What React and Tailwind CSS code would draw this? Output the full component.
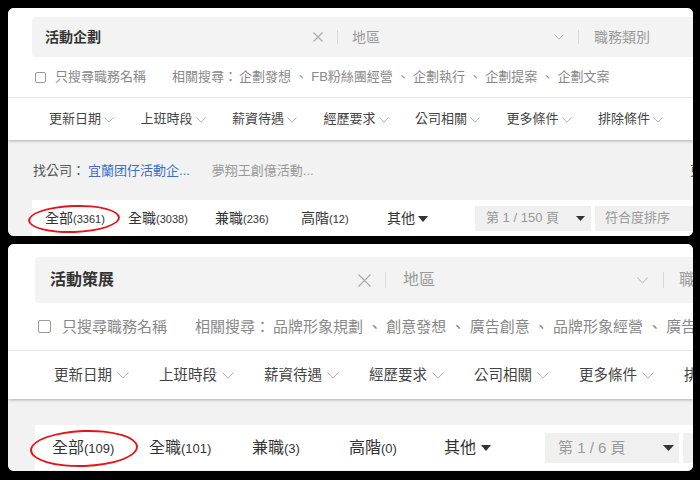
import React from "react";

const Chev = ({ w = 10, h = 6, color = "#b3b3b3" }) => (
  <svg width={w} height={h} viewBox={`0 0 ${w} ${h}`} fill="none" className="shrink-0">
    <polyline points={`0.5,0.5 ${w / 2},${h - 0.8} ${w - 0.5},0.5`} stroke={color} strokeWidth="1" />
  </svg>
);

const Caret = ({ w = 9, h = 5, color = "#333" }) => (
  <svg width={w} height={h} viewBox={`0 0 ${w} ${h}`} className="shrink-0">
    <polygon points={`0,0 ${w},0 ${w / 2},${h}`} fill={color} />
  </svg>
);

const XIcon = ({ s = 10 }) => (
  <svg width={s} height={s} viewBox={`0 0 ${s} ${s}`} fill="none" className="shrink-0">
    <path d={`M0.5 0.5L${s - 0.5} ${s - 0.5}M${s - 0.5} 0.5L0.5 ${s - 0.5}`} stroke="#aaa" strokeWidth="1.1" />
  </svg>
);

const filters = ["更新日期", "上班時段", "薪資待遇", "經歷要求", "公司相關", "更多條件", "排除條件"];

function Panel1() {
  return (
    <div className="h-[228px] rounded-[6px] bg-white overflow-hidden flex flex-col shrink-0">
      <div className="relative z-10 bg-white shadow-[0_1px_3px_rgba(0,0,0,0.28)]">
        <div className="pl-[24px] pt-[9px]">
          <div className="h-[40px] bg-[#f3f3f3] rounded-l-[4px] flex items-center whitespace-nowrap">
            <div className="w-[305px] shrink-0 flex items-center pl-[13px] pr-[14px]">
              <span className="flex-1 text-[14px] font-semibold text-[#333] leading-[20px]">活動企劃</span>
              <XIcon s={10} />
            </div>
            <div className="w-px h-[14px] bg-[#d9d9d9] shrink-0" />
            <div className="w-[240px] shrink-0 flex items-center pl-[14px] pr-[14px]">
              <span className="flex-1 text-[14px] text-[#999] leading-[20px]">地區</span>
              <Chev w={10} h={6} />
            </div>
            <div className="w-px h-[14px] bg-[#d9d9d9] shrink-0" />
            <div className="pl-[15px] text-[14px] text-[#999] leading-[20px]">職務類別</div>
          </div>
        </div>
        <div className="h-[40px] flex items-center pl-[27px] text-[13px] text-[#888] whitespace-nowrap leading-[18px]">
          <span className="w-[11px] h-[11px] border border-[#999] rounded-[2px] shrink-0" />
          <span className="ml-[9px]">只搜尋職務名稱</span>
          <span className="ml-[26px]">相關搜尋：</span>
          <span className="ml-[2px]">企劃發想 、 FB粉絲團經營 、 企劃執行 、 企劃提案 、 企劃文案</span>
        </div>
        <div className="border-t border-[#e6e6e6] h-[43px] flex items-center pl-[41px] gap-[26.5px] whitespace-nowrap">
          {filters.map((f) => (
            <div key={f} className="flex items-center shrink-0">
              <span className="text-[13px] text-[#444] leading-[18px]">{f}</span>
              <span className="ml-[3px] mt-[1px]"><Chev w={10} h={6} /></span>
            </div>
          ))}
        </div>
      </div>
      <div className="bg-[#f2f2f2] flex-1 flex flex-col">
        <div className="h-[60px] flex items-center pl-[25px] pt-[2px] text-[13px] leading-[18px] whitespace-nowrap">
          <span className="text-[#555]">找公司：</span>
          <span className="ml-[3px] text-[#3b6fc4]">宜蘭团仔活動企...</span>
          <span className="ml-[22px] text-[#999]">夢翔王創億活動...</span>
          <span className="ml-auto -mr-[10px] text-[#555]">更</span>
        </div>
        <div className="ml-[24px] bg-white h-[36px] flex items-center relative whitespace-nowrap">
          <div className="absolute left-[-4px] top-[5px] w-[92px] h-[28px] rounded-[50%] border-2 border-[#e3141c] -rotate-2" />
          <div className="flex items-center pl-[13px] text-[#333]">
            <span className="w-[83px] flex items-baseline"><span className="text-[14px] leading-[20px]">全部</span><span className="text-[11px]">(3361)</span></span>
            <span className="w-[87px] flex items-baseline"><span className="text-[14px] leading-[20px]">全職</span><span className="text-[11px]">(3038)</span></span>
            <span className="w-[86px] flex items-baseline"><span className="text-[14px] leading-[20px]">兼職</span><span className="text-[11px]">(236)</span></span>
            <span className="w-[86px] flex items-baseline"><span className="text-[14px] leading-[20px]">高階</span><span className="text-[11px]">(12)</span></span>
            <span className="w-[88px] flex items-center"><span className="text-[14px] leading-[20px]">其他</span><span className="ml-[3px] mt-[1px]"><Caret w={10} h={6} /></span></span>
          </div>
          <div className="w-[116px] h-[25px] bg-[#f0f0f0] flex items-center justify-between pl-[11px] pr-[6px] shrink-0">
            <span className="text-[13px] text-[#999] leading-[18px]">第 1 / 150 頁</span>
            <Caret w={9} h={5} />
          </div>
          <div className="ml-[4px] w-[120px] h-[25px] bg-[#f0f0f0] flex items-center pl-[10px] shrink-0">
            <span className="text-[13px] text-[#999] leading-[18px]">符合度排序</span>
          </div>
        </div>
      </div>
    </div>
  );
}

function Panel2() {
  return (
    <div className="h-[227px] rounded-[6px] bg-white overflow-hidden flex flex-col shrink-0">
      <div className="relative z-10 bg-white shadow-[0_1px_3px_rgba(0,0,0,0.28)]">
        <div className="pl-[27px] pt-[13px]">
          <div className="h-[46px] bg-[#f3f3f3] rounded-l-[4px] flex items-center whitespace-nowrap">
            <div className="w-[350px] shrink-0 flex items-center pl-[15px] pr-[14px]">
              <span className="flex-1 text-[16px] font-semibold text-[#333] leading-[22px]">活動策展</span>
              <XIcon s={13} />
            </div>
            <div className="w-px h-[16px] bg-[#d9d9d9] shrink-0" />
            <div className="w-[277px] shrink-0 flex items-center pl-[17px] pr-[15px]">
              <span className="flex-1 text-[16px] text-[#999] leading-[22px]">地區</span>
              <Chev w={11} h={7} />
            </div>
            <div className="w-px h-[16px] bg-[#d9d9d9] shrink-0" />
            <div className="pl-[15px] text-[16px] text-[#999] leading-[22px]">職務類別</div>
          </div>
        </div>
        <div className="h-[47px] flex items-center pl-[30px] text-[15px] text-[#888] whitespace-nowrap leading-[20px]">
          <span className="w-[13px] h-[13px] border border-[#999] rounded-[2px] shrink-0" />
          <span className="ml-[11px]">只搜尋職務名稱</span>
          <span className="ml-[28px]">相關搜尋：</span>
          <span className="ml-[3px]">品牌形象規劃 、 創意發想 、 廣告創意 、 品牌形象經營 、 廣告創意發想</span>
        </div>
        <div className="border-t border-[#e6e6e6] h-[49px] flex items-center pl-[46px] gap-[30px] whitespace-nowrap">
          {filters.map((f) => (
            <div key={f} className="flex items-center shrink-0">
              <span className="text-[14.5px] text-[#444] leading-[20px]">{f}</span>
              <span className="ml-[5px] mt-[1px]"><Chev w={12} h={7} /></span>
            </div>
          ))}
        </div>
      </div>
      <div className="bg-[#f2f2f2] flex-1 flex flex-col">
        <div className="h-[26px]" />
        <div className="ml-[27px] bg-white h-[45px] flex items-center relative whitespace-nowrap">
          <div className="absolute left-[-5px] top-[5px] w-[108px] h-[37px] rounded-[50%] border-[2.5px] border-[#e3141c] -rotate-2" />
          <div className="flex items-center pl-[17px] text-[#333]">
            <span className="w-[97px] flex items-baseline"><span className="text-[16px] leading-[22px]">全部</span><span className="text-[13px]">(109)</span></span>
            <span className="w-[103px] flex items-baseline"><span className="text-[16px] leading-[22px]">全職</span><span className="text-[13px]">(101)</span></span>
            <span className="w-[97px] flex items-baseline"><span className="text-[16px] leading-[22px]">兼職</span><span className="text-[13px]">(3)</span></span>
            <span className="w-[95px] flex items-baseline"><span className="text-[16px] leading-[22px]">高階</span><span className="text-[13px]">(0)</span></span>
            <span className="w-[101px] flex items-center"><span className="text-[16px] leading-[22px]">其他</span><span className="ml-[5px] mt-[1px]"><Caret w={10} h={6} /></span></span>
          </div>
          <div className="w-[134px] h-[30px] bg-[#f0f0f0] flex items-center justify-between pl-[13px] pr-[5px] shrink-0">
            <span className="text-[15px] text-[#999] leading-[20px]">第 1 / 6 頁</span>
            <Caret w={11} h={6} />
          </div>
          <div className="ml-[4px] w-[120px] h-[30px] bg-[#f0f0f0] flex items-center pl-[12px] shrink-0">
            <span className="text-[15px] text-[#999] leading-[20px]">符合度排序</span>
          </div>
        </div>
      </div>
    </div>
  );
}

export default function App() {
  return (
    <div className="w-[700px] h-[480px] bg-black pt-[8px] pl-[8px] pr-[7px] flex flex-col gap-[8px] overflow-hidden font-['Liberation_Sans','Noto_Sans_CJK_TC',sans-serif]">
      <Panel1 />
      <Panel2 />
    </div>
  );
}
